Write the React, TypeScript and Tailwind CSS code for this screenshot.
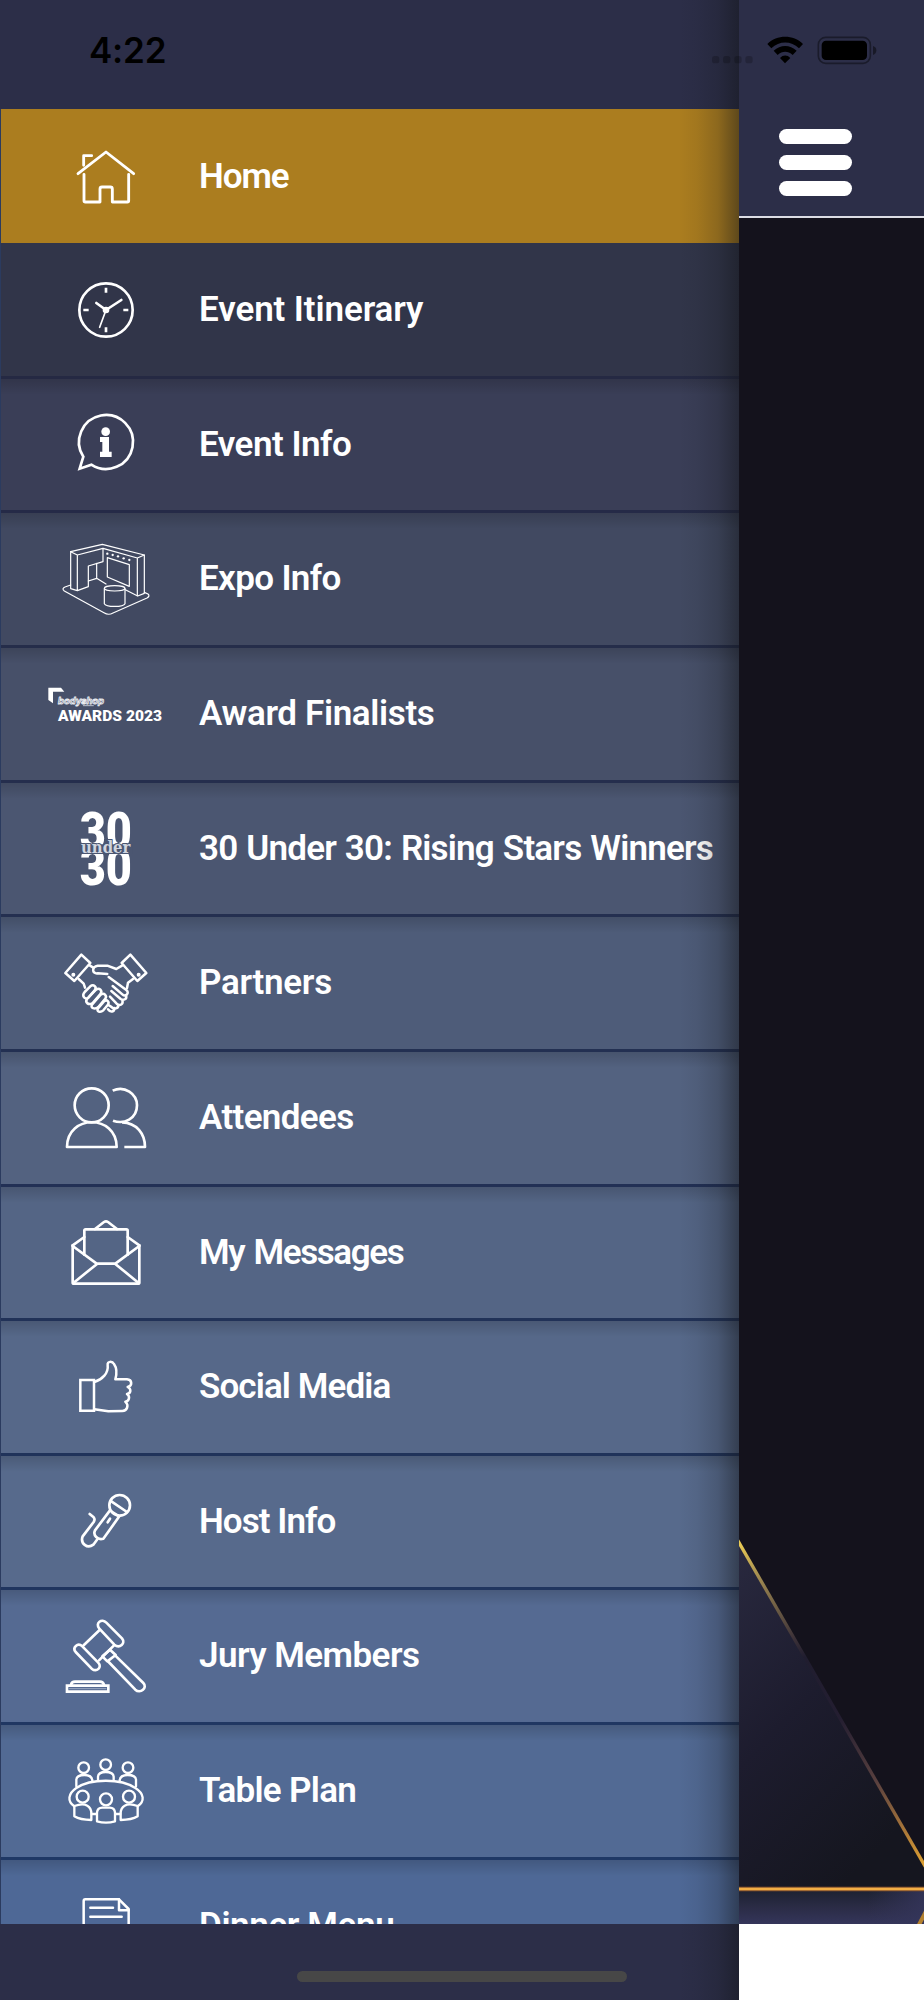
import type { ReactNode } from "react";

type Item = {
  label: string;
  row: string;
  tracking: string;
  viewBox: string;
  icon: ReactNode;
};

const home = (
  <g strokeWidth="8.5">
    <path d="M234 521 L318 456 L401 521" />
    <path d="M251 496 V467 H275" />
    <path d="M252 523 V602 Q252 606 256 606 H300 V567 Q300 561 306 561 H331 Q337 561 337 567 V606 H382 Q386 606 386 602 V523" />
  </g>
);

const clock = (
  <g strokeWidth="8">
    <circle cx="318" cy="210" r="80" />
    <path d="M318 143 V158 M318 262 V277 M250 210 H266 M370 210 H385" strokeWidth="8" strokeLinecap="butt" />
    <path d="M289 189 L318 210 L364 180" />
    <path d="M318 210 L299 262" strokeWidth="5" />
    <circle cx="318" cy="210" r="6" fill="white" />
  </g>
);

const info = (
  <g strokeWidth="8">
    <path d="M274 674 A81 81 0 1 0 250 650 L239 686 Z" strokeLinejoin="miter" />
    <circle cx="317" cy="575" r="13" fill="white" stroke="none" />
    <path d="M300 591 H327 V635 H335 V651 H300 V635 H307 V606 H300 Z" fill="white" stroke="none" />
  </g>
);

const expo = (
  <g strokeWidth="3.6">
    <path d="M122 125 L217 103 L343 135 V250 L323 258 L286 239" />
    <path d="M122 125 V236 L142 242 L175 230 V168 L219 155 V115 L142 135 V242 M122 125 L142 135 M219 115 L322 144 V257 M322 144 L343 135" />
    <path d="M200 160 V205 L175 213 M200 205 L228 222" />
    <path d="M232 143 L298 164 V229 L232 201 Z" />
    <ellipse cx="254" cy="235" rx="31" ry="8" />
    <path d="M223 236 V281 C228 292 280 292 285 281 V236" />
    <path d="M122 225 L105 231 Q94 236 103 243 L222 308 Q235 317 249 309 L351 264 Q361 258 354 252 L343 247" />
    <g fill="white" stroke="none">
      <circle cx="232" cy="131" r="3.5" />
      <circle cx="248" cy="135" r="3.5" />
      <circle cx="264" cy="139" r="3.5" />
      <circle cx="281" cy="145" r="3.5" />
      <circle cx="298" cy="150" r="3.5" />
    </g>
  </g>
);

const awards = (
  <g fill="white" stroke="none">
    <path d="M55 533 H93 L103 545 H69 V580 L55 570 Z" />
    <text x="84" y="581" textLength="138" lengthAdjust="spacingAndGlyphs" fontSize="27" fontWeight="700" fontStyle="italic" fontFamily="Inter, sans-serif" fill="#475069" stroke="#e9ebf0" strokeWidth="2.6">
      bodyshop
    </text>
    <path d="M160 587 H190" stroke="#b9bfcc" strokeWidth="3" />
    <text x="84" y="633" textLength="312" lengthAdjust="spacingAndGlyphs" fontSize="44" fontWeight="900" fontFamily="Roboto, sans-serif">
      AWARDS 2023
    </text>
  </g>
);

const thirty = (
  <g fill="white" stroke="none" fontFamily="Roboto, sans-serif" fontWeight="900">
    <text x="149" y="208" textLength="157" lengthAdjust="spacingAndGlyphs" fontSize="155">
      30
    </text>
    <text x="149" y="316" textLength="157" lengthAdjust="spacingAndGlyphs" fontSize="155">
      30
    </text>
    <rect x="148" y="193" width="160" height="29" fill="#4b5671" />
    <text x="153" y="220" textLength="148" lengthAdjust="spacingAndGlyphs" fontSize="48" fontWeight="700" fontFamily="DejaVu Serif, serif" fill="#cfd4de" stroke="#4b5671" strokeWidth="6" paintOrder="stroke">
      under
    </text>
  </g>
);

const handshake = (
  <g strokeWidth="7.5">
    <path d="M154 524 L106 579 L133 603 L181 549 Z M301 524 L349 579 L322 603 L275 549 Z" />
    <circle cx="130" cy="584" r="4" fill="white" strokeWidth="4" />
    <circle cx="326" cy="584" r="4" fill="white" strokeWidth="4" />
    <path d="M180 557 L190 563 M146 597 L161 611 L165 623 M309 597 L294 608 L291 624" />
    <path d="M276 557 L259 567 L232 557 H203 C185 560 185 582 203 580 L232 582 M236 591 L289 630 C300 639 287 652 277 643 L248 618" />
    <path d="M288 646 C292 657 281 663 272 657 L244 633 M277 660 C281 673 270 679 260 671 L240 650 M265 675 C266 685 252 690 243 680 L235 675 M234 688 C241 698 254 696 253 684" />
    <path d="M164 636 L181 619 C191 611 202 622 194 631 L175 653 C165 661 154 648 164 636 Z" />
    <path d="M171 657 L198 629 C208 621 219 633 211 642 L188 669 C176 677 164 668 171 657 Z" />
    <path d="M186 674 L212 644 C223 637 233 648 225 657 L205 681 C194 690 180 684 186 674 Z" />
    <path d="M204 685 L222 664 C231 657 240 666 233 675 L220 691 C211 699 198 695 204 685 Z" />
  </g>
);

const people = (
  <g strokeWidth="8">
    <circle cx="185" cy="136" r="51" />
    <path d="M111 261 C111 162 260 162 260 261 Z" />
    <path d="M248 92 C284 75 321 102 321 136 C321 177 282 194 249 182" strokeLinecap="butt" />
    <path d="M276 187 C320 188 345 222 345 261 H283" strokeLinecap="butt" />
  </g>
);

const mail = (
  <g strokeWidth="8">
    <path d="M128 556 V668 Q128 671 132 671 H324 Q328 671 328 668 V556" />
    <path d="M163 584 V512 Q163 508 167 508 H289 Q293 508 293 512 V584" />
    <path d="M128 556 L163 531 M328 556 L293 531 M195 507 L222 486 Q228 482 234 486 L261 507" />
    <path d="M128 558 L200 611 H256 L328 558 M131 668 L202 611 M325 668 L255 611" />
  </g>
);

const thumb = (
  <g strokeWidth="7.5">
    <path d="M151 150 H192 V242 H151 Z" strokeLinejoin="miter" />
    <path d="M193 156 C217 148 236 130 233 105 C231 93 247 93 252 102 C262 116 261 130 256 148 H291 C307 149 308 167 293 171 C305 177 303 190 291 192 C302 200 297 213 286 215 C298 226 291 243 277 243 L235 244 L193 238" />
  </g>
);

const mic = (
  <g strokeWidth="8">
    <circle cx="269" cy="526" r="31" />
    <path d="M244 514 L291 546" />
    <path d="M240 541 L195 601 C188 616 203 631 220 626 L268 559" />
    <path d="M247 546 L264 557" />
    <path d="M240 566 L233 577" strokeWidth="8" />
    <path d="M179 552 L191 562 Q196 568 191 576 L158 619 C150 640 172 658 190 644 L201 629" />
  </g>
);

const gavel = (
  <g strokeWidth="8">
    <path d="M208 86 C194 68 216 55 229 68 L276 115 C288 130 269 147 253 134 Z" />
    <path d="M137 156 C126 142 143 127 157 139 L204 187 C218 202 200 218 185 206 Z" />
    <path d="M208 91 L161 136 M252 136 L207 181" />
    <path d="M240 149 L257 165 L232 184 L217 169 Z" />
    <path d="M256 167 L340 249 C354 263 331 283 316 269 L236 186" />
    <path d="M111 257 H235 V275 H111 Z" strokeLinejoin="miter" />
    <path d="M123 254 Q125 245 135 245 H210 Q219 245 222 254" />
    <path d="M118 266 H228" stroke="#9eabc3" strokeWidth="3" />
  </g>
);

const table = (
  <g strokeWidth="7">
    <circle cx="161" cy="503" r="16" />
    <circle cx="227" cy="494" r="16" />
    <circle cx="294" cy="503" r="16" />
    <path d="M139 559 V539 Q140 525 163 525 Q186 525 187 542 M204 539 V530 Q205 516 227 516 Q250 516 251 530 V539 M269 542 Q270 525 293 525 Q317 525 318 539 V559" />
    <path d="M133 619 C111 604 114 581 139 564 C182 535 273 535 316 564 C343 581 345 604 323 619" />
    <circle cx="158" cy="590" r="18" />
    <circle cx="228" cy="598" r="18" />
    <circle cx="297" cy="590" r="18" />
    <path d="M133 618 Q158 609 172 617 Q184 624 184 640 V660 Q151 660 133 649 Z" />
    <path d="M323 618 Q298 609 284 617 Q272 624 272 640 V660 Q305 660 323 649 Z" />
    <path d="M201 664 V638 Q202 623 217 623 H239 Q254 623 255 638 V664 Q228 672 201 664 Z M185 642 H199 M257 642 H271" />
  </g>
);

const menu = (
  <g strokeWidth="7.5">
    <path d="M161 1100 V903 Q161 898 166 898 H267 L296 927 V1100" />
    <path d="M267 898 V931 H296 M181 923 H249 M181 950 H275 M181 977 H275" />
  </g>
);

const items: Item[] = [
  { label: "Home", row: "h-[134px] bg-[#ab7d1f]", tracking: "pt-[48px] tracking-[-1.1px]", viewBox: "0 327 555 402", icon: home },
  { label: "Event Itinerary", row: "h-[135.8px] border-b-[3px] border-[#252943] bg-[#313549]", tracking: "pt-[47px] tracking-[-0.1px]", viewBox: "0 9 555 402", icon: clock },
  { label: "Event Info", row: "h-[134.64px] border-b-[3px] border-[#252a47] bg-[#3a3e57]", tracking: "pt-[46px] tracking-[-0.5px]", viewBox: "0 417 555 402", icon: info },
  { label: "Expo Info", row: "h-[134.64px] border-b-[3px] border-[#252d4a] bg-[#414961]", tracking: "pt-[46px] tracking-[-0.65px]", viewBox: "-90 9 555 402", icon: expo },
  { label: "Award Finalists", row: "h-[134.64px] border-b-[3px] border-[#252e4d] bg-[#475069]", tracking: "pt-[46px] tracking-[-0.35px]", viewBox: "-90 414 555 402", icon: awards },
  { label: "30 Under 30: Rising Stars Winners", row: "h-[134.64px] border-b-[3px] border-[#242f50] bg-[#4b5671]", tracking: "pt-[46px] tracking-[-0.8px] [word-spacing:1px]", viewBox: "-90 9 555 402", icon: thirty },
  { label: "Partners", row: "h-[134.64px] border-b-[3px] border-[#233052] bg-[#4e5c79]", tracking: "pt-[46px] tracking-[-0.3px]", viewBox: "-90 411 555 402", icon: handshake },
  { label: "Attendees", row: "h-[134.64px] border-b-[3px] border-[#223055] bg-[#536280]", tracking: "pt-[46px] tracking-[-0.65px]", viewBox: "-90 -24 555 402", icon: people },
  { label: "My Messages", row: "h-[134.64px] border-b-[3px] border-[#213258] bg-[#546585]", tracking: "pt-[46px] tracking-[-1.4px] [word-spacing:2px]", viewBox: "-90 381 555 402", icon: mail },
  { label: "Social Media", row: "h-[134.64px] border-b-[3px] border-[#20335a] bg-[#566889]", tracking: "pt-[46px] tracking-[-0.9px]", viewBox: "-90 -27 555 402", icon: thumb },
  { label: "Host Info", row: "h-[134.64px] border-b-[3px] border-[#20355f] bg-[#576a8c]", tracking: "pt-[46px] tracking-[-0.95px]", viewBox: "-90 378 555 402", icon: mic },
  { label: "Jury Members", row: "h-[134.64px] border-b-[3px] border-[#203762] bg-[#556a92]", tracking: "pt-[46px] tracking-[-0.55px]", viewBox: "-90 -30 555 402", icon: gavel },
  { label: "Table Plan", row: "h-[134.64px] border-b-[3px] border-[#1f3865] bg-[#526a94]", tracking: "pt-[46px] tracking-[-0.7px]", viewBox: "-90 375 555 402", icon: table },
  { label: "Dinner Menu", row: "h-[134.64px] bg-[#4e6896]", tracking: "pt-[46px] tracking-[-0.4px]", viewBox: "-90 780 555 402", icon: menu },
];

function MenuRow({ item, index }: { item: Item; index: number }) {
  return (
    <li className={`relative flex shrink-0 items-start ${item.row}`}>
      {index > 1 && <div className="absolute inset-x-0 top-0 h-4 bg-linear-to-b from-black/15 to-transparent" />}
      <svg width="185" height="134" viewBox={item.viewBox} className="relative -ml-px shrink-0" fill="none" stroke="white" strokeLinecap="round" strokeLinejoin="round">
        {item.icon}
      </svg>
      <span className={`relative ml-[14px] text-[35px] leading-[40px] font-semibold whitespace-nowrap ${item.tracking}`}>{item.label}</span>
    </li>
  );
}

function StatusBar() {
  return (
    <div className="absolute inset-x-0 top-0 z-20 h-[109px] text-black">
      <span className="absolute top-[28px] left-[89px] font-[Inter] text-[35px] leading-[44px] font-semibold tracking-[-0.2px]">4:22</span>
      <svg className="absolute top-0 left-[640px]" width="284" height="100" viewBox="0 0 852 300">
        <g fill="#000" fillOpacity="0.2">
          <rect x="216" y="168" width="22" height="22" rx="8" />
          <rect x="249" y="168" width="22" height="22" rx="8" />
          <rect x="283" y="168" width="22" height="22" rx="8" />
          <rect x="316" y="168" width="22" height="22" rx="8" />
        </g>
        <path d="M382 132 C411 103 460 103 489 132 L477 145 C453 122 418 122 394 145 Z" />
        <path d="M401 152 C421 133 450 133 470 152 L458 165 C444 152 427 152 413 165 Z" />
        <path d="M420 174 C429 164 442 164 451 174 L435 190 Z" />
        <rect x="535" y="112" width="156" height="78" rx="22" fill="none" stroke="#000" strokeOpacity="0.4" strokeWidth="5" />
        <rect x="545" y="122" width="136" height="58" rx="13" />
        <path d="M699 138 Q709 141 709 151 Q709 162 699 165 Z" fillOpacity="0.45" />
      </svg>
    </div>
  );
}

function Backdrop() {
  return (
    <svg className="block w-full" width="185" height="1706" viewBox="0 0 555 5118" preserveAspectRatio="none">
      <defs>
        <linearGradient id="facet" x1="0" y1="0" x2="0.55" y2="1">
          <stop offset="0" stopColor="#29293f" />
          <stop offset="0.5" stopColor="#1d1c2e" />
          <stop offset="1" stopColor="#15161f" />
        </linearGradient>
        <linearGradient id="edge" gradientUnits="userSpaceOnUse" x1="0" y1="3968" x2="555" y2="4935">
          <stop offset="0" stopColor="#efcf55" />
          <stop offset="0.12" stopColor="#9c8650" />
          <stop offset="0.3" stopColor="#3d3238" />
          <stop offset="0.36" stopColor="#201d2f" />
          <stop offset="0.55" stopColor="#241e31" />
          <stop offset="0.75" stopColor="#5a413f" />
          <stop offset="0.88" stopColor="#a0703a" />
          <stop offset="1" stopColor="#dc9f32" />
        </linearGradient>
        <linearGradient id="floor" x1="0" y1="0" x2="0" y2="1">
          <stop offset="0" stopColor="#1d2232" />
          <stop offset="0.5" stopColor="#2b2c46" />
          <stop offset="1" stopColor="#34355a" />
        </linearGradient>
        <linearGradient id="glow" x1="0.7" y1="0" x2="1" y2="0">
          <stop offset="0" stopColor="#34355a" stopOpacity="0" />
          <stop offset="1" stopColor="#34355a" stopOpacity="0.85" />
        </linearGradient>
      </defs>
      <rect width="555" height="5118" fill="#14121c" />
      <path d="M0 3972 L555 4939 V5010 H0 Z" fill="url(#facet)" />
      <path d="M-4 3967 L559 4946" stroke="url(#edge)" strokeWidth="10" />
      <rect y="5019" width="555" height="99" fill="url(#floor)" />
      <rect y="5019" width="555" height="99" fill="url(#glow)" />
      <path d="M538 5124 L562 5078" stroke="#b3802f" strokeWidth="12" />
      <rect y="5006" width="555" height="14" fill="#7a4a2c" />
      <rect y="5009" width="555" height="8" fill="#f2ae45" />
    </svg>
  );
}

export default function App() {
  return (
    <div className="relative flex h-[2000px] w-[924px] overflow-hidden bg-white font-[Roboto] text-white">
      <StatusBar />
      <aside className="relative flex w-[739px] shrink-0 flex-col bg-[#2c2e48]">
        <div className="h-[109px] shrink-0" />
        <ul className="flex h-[1815px] flex-col overflow-hidden border-l border-[#2b3b5f]">
          {items.map((item, index) => (
            <MenuRow key={item.label} item={item} index={index} />
          ))}
        </ul>
        <div className="flex grow items-start pt-[47px] pl-[297px]">
          <div className="h-[11px] w-[330px] rounded-full bg-[#474747]" />
        </div>
        <div className="absolute inset-y-0 right-0 w-[60px] bg-[linear-gradient(to_right,transparent,rgba(18,20,24,0.06)_30%,rgba(18,20,24,0.2)_65%,rgba(18,20,24,0.5))]" />
      </aside>
      <main className="flex grow flex-col">
        <header className="flex h-[218px] flex-col border-b-2 border-[#dcdce4] bg-[#2c2e48] pt-[129px] pl-[40px]">
          <button className="flex w-[73px] flex-col gap-[11.4px]" aria-label="Menu">
            <span className="h-[14.8px] w-full rounded-full bg-white" />
            <span className="h-[14.8px] w-full rounded-full bg-white" />
            <span className="h-[14.8px] w-full rounded-full bg-white" />
          </button>
        </header>
        <Backdrop />
      </main>
    </div>
  );
}
